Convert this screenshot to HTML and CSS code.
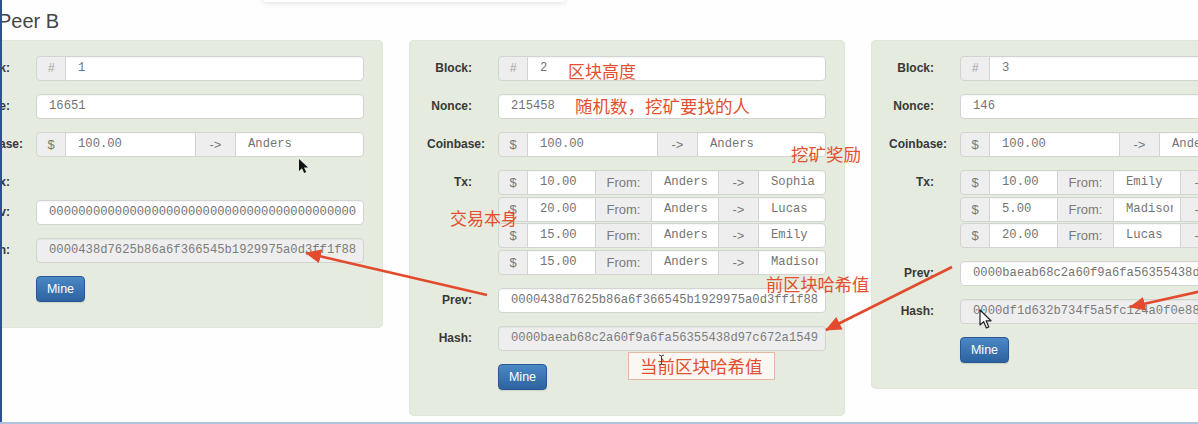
FILE: index.html
```html
<!DOCTYPE html>
<html lang="zh">
<head>
<meta charset="utf-8">
<title>Peer B</title>
<link rel="stylesheet" href="styles.css">
</head>
<body>
<div class="screen">
  <div class="popup-shadow"></div>
  <h3 class="peer">Peer B</h3>
  <div class="chain">
    <!-- Block 1 -->
    <div class="card">
      <div class="row"><span class="lbl">Block:</span>
        <div class="group"><span class="addon w30 hash-sign">#</span><span class="field grow"><span class="v">1</span></span></div></div>
      <div class="row"><span class="lbl">Nonce:</span>
        <div class="group"><span class="field grow"><span class="v">16651</span></span></div></div>
      <div class="row"><span class="lbl">Coinbase:</span>
        <div class="group"><span class="addon w30">$</span><span class="field w131"><span class="v">100.00</span></span><span class="addon w41">-&gt;</span><span class="field grow"><span class="v">Anders</span></span></div></div>
      <div class="row row-empty"><span class="lbl">Tx:</span><div class="txs"></div></div>
      <div class="row"><span class="lbl">Prev:</span>
        <div class="group"><span class="field grow"><span class="v">0000000000000000000000000000000000000000000000000000000000000000</span></span></div></div>
      <div class="row"><span class="lbl">Hash:</span>
        <div class="group"><span class="field grow disabled"><span class="v">0000438d7625b86a6f366545b1929975a0d3ff1f8845e3a7c21b0d9f6e4a3b2c</span></span></div></div>
      <div class="row row-last"><span class="lbl"></span><div><button class="mine">Mine</button></div></div>
    </div>

    <!-- Block 2 -->
    <div class="card">
      <div class="row"><span class="lbl">Block:</span>
        <div class="group"><span class="addon w30 hash-sign">#</span><span class="field grow"><span class="v">2</span></span></div></div>
      <div class="row"><span class="lbl">Nonce:</span>
        <div class="group"><span class="field grow"><span class="v">215458</span></span></div></div>
      <div class="row"><span class="lbl">Coinbase:</span>
        <div class="group"><span class="addon w30">$</span><span class="field w131"><span class="v">100.00</span></span><span class="addon w41">-&gt;</span><span class="field grow"><span class="v">Anders</span></span></div></div>
      <div class="row"><span class="lbl">Tx:</span>
        <div class="txs">
          <div class="group"><span class="addon w30">$</span><span class="field w69"><span class="v">10.00</span></span><span class="addon w57">From:</span><span class="field w68"><span class="v">Anders</span></span><span class="addon w41">-&gt;</span><span class="field grow"><span class="v">Sophia</span></span></div>
          <div class="group"><span class="addon w30">$</span><span class="field w69"><span class="v">20.00</span></span><span class="addon w57">From:</span><span class="field w68"><span class="v">Anders</span></span><span class="addon w41">-&gt;</span><span class="field grow"><span class="v">Lucas</span></span></div>
          <div class="group"><span class="addon w30">$</span><span class="field w69"><span class="v">15.00</span></span><span class="addon w57">From:</span><span class="field w68"><span class="v">Anders</span></span><span class="addon w41">-&gt;</span><span class="field grow"><span class="v">Emily</span></span></div>
          <div class="group"><span class="addon w30">$</span><span class="field w69"><span class="v">15.00</span></span><span class="addon w57">From:</span><span class="field w68"><span class="v">Anders</span></span><span class="addon w41">-&gt;</span><span class="field grow"><span class="v">Madison</span></span></div>
        </div></div>
      <div class="row"><span class="lbl">Prev:</span>
        <div class="group"><span class="field grow"><span class="v">0000438d7625b86a6f366545b1929975a0d3ff1f8845e3a7c21b0d9f6e4a3b2c</span></span></div></div>
      <div class="row"><span class="lbl">Hash:</span>
        <div class="group"><span class="field grow disabled"><span class="v">0000baeab68c2a60f9a6fa56355438d97c672a154931d0e2b7f8a9c6d5e4f3a2</span></span></div></div>
      <div class="row row-last"><span class="lbl"></span><div><button class="mine">Mine</button></div></div>
    </div>

    <!-- Block 3 -->
    <div class="card">
      <div class="row"><span class="lbl">Block:</span>
        <div class="group"><span class="addon w30 hash-sign">#</span><span class="field grow"><span class="v">3</span></span></div></div>
      <div class="row"><span class="lbl">Nonce:</span>
        <div class="group"><span class="field grow"><span class="v">146</span></span></div></div>
      <div class="row"><span class="lbl">Coinbase:</span>
        <div class="group"><span class="addon w30">$</span><span class="field w131"><span class="v">100.00</span></span><span class="addon w41">-&gt;</span><span class="field grow"><span class="v">Anders</span></span></div></div>
      <div class="row"><span class="lbl">Tx:</span>
        <div class="txs">
          <div class="group"><span class="addon w30">$</span><span class="field w69"><span class="v">10.00</span></span><span class="addon w57">From:</span><span class="field w68"><span class="v">Emily</span></span><span class="addon w41">-&gt;</span><span class="field grow"><span class="v">Jackson</span></span></div>
          <div class="group"><span class="addon w30">$</span><span class="field w69"><span class="v">5.00</span></span><span class="addon w57">From:</span><span class="field w68"><span class="v">Madison</span></span><span class="addon w41">-&gt;</span><span class="field grow"><span class="v">Jackson</span></span></div>
          <div class="group"><span class="addon w30">$</span><span class="field w69"><span class="v">20.00</span></span><span class="addon w57">From:</span><span class="field w68"><span class="v">Lucas</span></span><span class="addon w41">-&gt;</span><span class="field grow"><span class="v">Grace</span></span></div>
        </div></div>
      <div class="row"><span class="lbl">Prev:</span>
        <div class="group"><span class="field grow"><span class="v">0000baeab68c2a60f9a6fa56355438d97c672a154931d0e2b7f8a9c6d5e4f3a2</span></span></div></div>
      <div class="row"><span class="lbl">Hash:</span>
        <div class="group"><span class="field grow disabled"><span class="v">0000df1d632b734f5a5fc124a0f0e889b3c7d2e1f6a5b4c3d2e1f0a9b8c7d6e5</span></span></div></div>
      <div class="row row-last"><span class="lbl"></span><div><button class="mine">Mine</button></div></div>
    </div>
  </div>

  <!-- annotations -->
  <svg class="arrows" width="1198" height="424" viewBox="0 0 1198 424">
    <defs>
      <marker id="head" markerUnits="userSpaceOnUse" markerWidth="16" markerHeight="14" refX="15" refY="7" orient="auto">
        <path d="M0 0 L16 7 L0 14 Z" fill="#e24b2d"/>
      </marker>
    </defs>
    <line x1="487" y1="295" x2="306" y2="253" stroke="#e24b2d" stroke-width="2.6" marker-end="url(#head)"/>
    <line x1="952" y1="267" x2="826" y2="330" stroke="#e24b2d" stroke-width="2.6" marker-end="url(#head)"/>
    <line x1="1202" y1="291" x2="1130" y2="307" stroke="#e24b2d" stroke-width="2.6" marker-end="url(#head)"/>
  </svg>

  <span class="note n-height">区块高度</span>
  <span class="note n-nonce">随机数，挖矿要找的人</span>
  <span class="note n-reward">挖矿奖励</span>
  <span class="note n-tx">交易本身</span>
  <span class="note n-prev">前区块哈希值</span>
  <span class="note n-hash">当前区块哈希值</span>

  <svg class="cursor c-black" width="10" height="15" viewBox="0 0 10 15"><path d="M0 0 L0 12 L3 9.2 L5.2 14 L7.2 13 L5 8.4 L9 8.4 Z" fill="#111"/></svg>
  <svg class="cursor c-white" width="14" height="21" viewBox="0 0 14 21"><path d="M1 1 L1 16 L4.6 12.6 L7.4 19 L9.8 18 L7.1 11.8 L12 11.8 Z" fill="#fff" stroke="#222" stroke-width="1.2" stroke-linejoin="round"/></svg>
  <svg class="cursor c-ibeam" width="7" height="12" viewBox="0 0 7 12"><path d="M1 1 L3.5 2 L6 1 M3.5 2 L3.5 10 M1 11 L3.5 10 L6 11" fill="none" stroke="#444" stroke-width="1"/></svg>

  <div class="edge-left"></div>
  <div class="edge-bottom"></div>
</div>
</body>
</html>
```

FILE: styles.css
```css
html, body {
  margin: 0;
  padding: 0;
  background: #fff;
}

.screen {
  position: relative;
  width: 1198px;
  height: 424px;
  overflow: hidden;
  background: #fefefe;
  font-family: "Liberation Sans", Arial, sans-serif;
}

.popup-shadow {
  position: absolute;
  left: 263px;
  top: -30px;
  width: 302px;
  height: 32px;
  background: #fff;
  box-shadow: 0 1px 6px rgba(0, 0, 0, 0.13);
  border-radius: 3px;
}

.peer {
  margin: 0 0 0 -2px;
  padding: 9px 0 7px;
  font-size: 20px;
  line-height: 24px;
  font-weight: normal;
  color: #454545;
}

.chain {
  display: flex;
  align-items: flex-start;
  gap: 26px;
  margin-left: -53px;
}

.card {
  flex: 0 0 436px;
  box-sizing: border-box;
  padding: 16px 19px 26px 18px;
  background: #e5ebdf;
  box-shadow: inset 0 0 0 1px #dfe6d8;
  border-radius: 5px;
}

.row {
  display: grid;
  grid-template-columns: 45px 328px;
  column-gap: 26px;
  margin-bottom: 13px;
}

.row-empty {
  margin-bottom: 5px;
}

.row-last {
  margin-bottom: 0;
}

.lbl {
  display: block;
  height: 25px;
  line-height: 25px;
  text-align: right;
  white-space: nowrap;
  font-size: 12px;
  font-weight: bold;
  color: #383838;
}

.txs {
  display: flex;
  flex-direction: column;
  gap: 1.5px;
  min-height: 25px;
}

.group {
  display: flex;
  height: 25px;
}

.group > * + * {
  margin-left: -1px;
}

.group > :first-child {
  border-radius: 4px 0 0 4px;
}

.group > :last-child {
  border-radius: 0 4px 4px 0;
}

.group > :only-child {
  border-radius: 4px;
}

.addon,
.field {
  box-sizing: border-box;
  height: 25px;
  border: 1px solid #d2d5cf;
  flex: 0 0 auto;
}

.addon {
  background: #eeeeee;
  color: #7a7a7a;
  font-size: 13px;
  line-height: 23px;
  text-align: center;
  white-space: nowrap;
}

.hash-sign {
  color: #a5a5a5;
  font-style: italic;
  font-size: 12px;
}

.field {
  background: #fff;
  padding: 0 7px 0 12px;
  box-shadow: inset 0 1px 1px rgba(0, 0, 0, 0.04);
}

.field .v {
  display: block;
  overflow: hidden;
  white-space: nowrap;
  font-family: "Liberation Mono", "Courier New", monospace;
  font-size: 12.2px;
  line-height: 23px;
  color: #747474;
}

.field.disabled {
  background: #eeeeee;
}

.field.disabled .v {
  color: #7c7c7c;
}

.grow { flex: 1 1 auto; min-width: 0; }
.w30 { width: 30px; }
.w41 { width: 41px; }
.w57 { width: 57px; }
.w68 { width: 68px; }
.w69 { width: 69px; }
.w131 { width: 131px; }

.mine {
  display: block;
  width: 49px;
  height: 26px;
  padding: 0;
  border: 1px solid #2a5894;
  border-radius: 4px;
  background: linear-gradient(#4b88c6, #2c629f);
  color: #fff;
  font-family: "Liberation Sans", Arial, sans-serif;
  font-size: 12.5px;
  line-height: 24px;
  box-shadow: 0 1px 1px rgba(0, 0, 0, 0.12);
}

.arrows {
  position: absolute;
  left: 0;
  top: 0;
  pointer-events: none;
}

.note {
  position: absolute;
  font-family: "Noto Sans CJK SC", "Noto Sans", sans-serif;
  font-size: 17.5px;
  line-height: 1;
  color: #e44f2f;
  white-space: nowrap;
}

.n-height { left: 568px; top: 62px; font-size: 17px; }
.n-nonce  { left: 575px; top: 97px; }
.n-reward { left: 791px; top: 145px; }
.n-tx     { left: 450px; top: 209px; font-size: 17px; }
.n-prev   { left: 766px; top: 275px; font-size: 17.2px; }
.n-hash {
  left: 628px;
  top: 352px;
  box-sizing: border-box;
  width: 147px;
  height: 28px;
  padding: 4px 0 0 11px;
  border: 1px solid #e2b9a2;
  background: rgba(252, 249, 244, 0.95);
}

.cursor {
  position: absolute;
}
.c-black { left: 299px; top: 159px; }
.c-white { left: 979px; top: 309px; }
.c-ibeam { left: 658px; top: 354px; }

.edge-left {
  position: absolute;
  left: 0;
  top: 0;
  width: 2px;
  height: 424px;
  background: #2e4f96;
}

.edge-bottom {
  position: absolute;
  left: 0;
  bottom: 0;
  width: 1198px;
  height: 2px;
  background: #b2c1dc;
}
```
